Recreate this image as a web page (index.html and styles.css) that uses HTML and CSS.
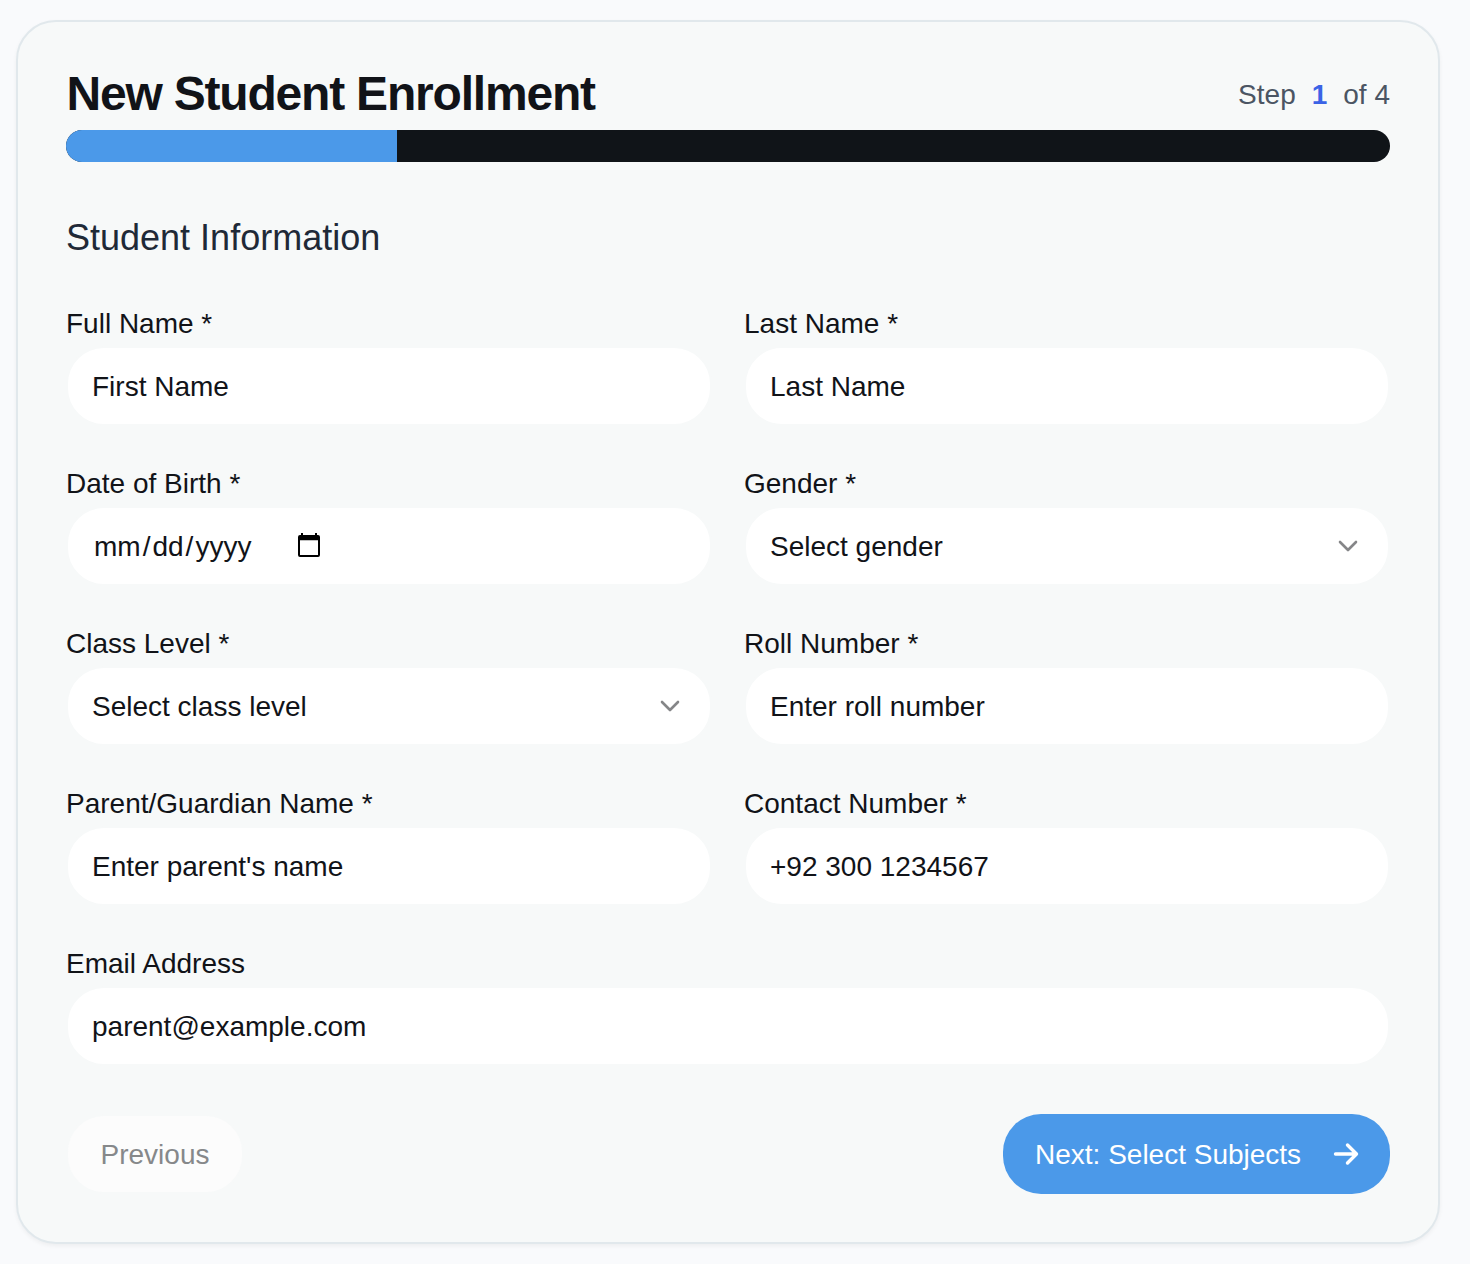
FILE: index.html
```html
<!DOCTYPE html>
<html lang="en">
<head>
<meta charset="utf-8">
<title>New Student Enrollment</title>
<link rel="stylesheet" href="styles.css">
</head>
<body>
<main class="card">
  <header class="head">
    <h1 class="title">New Student Enrollment</h1>
    <p class="step"><span>Step</span><b>1</b><span>of 4</span></p>
  </header>
  <div class="progress"><div class="bar"></div></div>
  <h2 class="section">Student Information</h2>
  <form class="grid">
    <div class="field"><label>Full Name *</label><div class="control">First Name</div></div>
    <div class="field"><label>Last Name *</label><div class="control">Last Name</div></div>
    <div class="field"><label>Date of Birth *</label><div class="control date"><span class="date-text"><span class="part">mm</span>/<span class="part">dd</span>/<span class="part">yyyy</span></span><svg class="calendar" viewBox="0 0 22 24"><path fill="#000" fill-rule="evenodd" d="M3 0h2v2h12V0h2v2h1a2 2 0 0 1 2 2v18a2 2 0 0 1-2 2H2a2 2 0 0 1-2-2V4a2 2 0 0 1 2-2h1zM2 7.200v14.800h18V7.200z"/></svg></div></div>
    <div class="field"><label>Gender *</label><div class="control select"><span>Select gender</span><svg class="chevron" viewBox="0 0 20 12"><path d="M2 2l8 8 8-8"/></svg></div></div>
    <div class="field"><label>Class Level *</label><div class="control select"><span>Select class level</span><svg class="chevron" viewBox="0 0 20 12"><path d="M2 2l8 8 8-8"/></svg></div></div>
    <div class="field"><label>Roll Number *</label><div class="control">Enter roll number</div></div>
    <div class="field"><label>Parent/Guardian Name *</label><div class="control">Enter parent's name</div></div>
    <div class="field"><label>Contact Number *</label><div class="control">+92 300 1234567</div></div>
    <div class="field wide"><label>Email Address</label><div class="control">parent@example.com</div></div>
  </form>
  <footer class="actions">
    <button class="prev" disabled>Previous</button>
    <button class="next"><span>Next: Select Subjects</span><svg class="arrow" viewBox="0 0 26 24"><path d="M2.500 12h21M14.500 3l9 9-9 9"/></svg></button>
  </footer>
</main>
</body>
</html>
```
FILE: styles.css
```css
* { box-sizing: border-box; }
body {
  margin: 0;
  padding: 20px 30px 20px 16px;
  height: 1264px;
  overflow: hidden;
  background: #f9fafc;
  color: #111318;
  font: 28px/40px "Liberation Sans", Arial, sans-serif;
}
.card {
  height: 1224px;
  padding: 42px 48px 48px;
  border: 2px solid #e1e8ec;
  border-radius: 40px;
  background: #f7f9f9;
  box-shadow: 0 2px 4px rgba(0, 0, 0, .05);
}
.head { display: flex; justify-content: space-between; align-items: center; height: 62px; margin-bottom: 4px; }
.title { margin: 0; padding: 0 0 2px .5px; font-size: 48px; line-height: 60px; letter-spacing: -1.2px; white-space: nowrap; }
.step { display: flex; gap: 16px; margin: 0; color: #4b5563; }
.step b { color: #3b63e6; }
.progress { height: 32px; border-radius: 16px; overflow: hidden; background: #101418; }
.bar { width: 25%; height: 100%; background: #4b99e9; }
.section { margin: 48px 0 40px; font-size: 36px; line-height: 56px; font-weight: 400; color: #1f2937; }
.grid { display: grid; grid-template-columns: 1fr 1fr; gap: 40px 32px; }
.field { height: 120px; }
.wide { grid-column: 1 / -1; }
label { display: block; height: 40px; line-height: 36px; }
.control { display: flex; align-items: center; height: 80px; padding: 1px 24px 0; border: 2px solid #f7f9f9; border-radius: 38px; background: #fff; }
.select { justify-content: space-between; padding-right: 30px; }
.chevron { width: 20px; height: 12px; margin-bottom: 2px; fill: none; stroke: #858688; stroke-width: 2.6; stroke-linecap: round; stroke-linejoin: round; }
.part { padding: 0 2px; }
.calendar { width: 22px; height: 24px; margin: 0 0 4px 45px; }
.actions { display: flex; justify-content: space-between; margin-top: 48px; }
button { height: 80px; border: 0; border-radius: 38px; font: inherit; }
.prev { width: 178px; padding: 1px 0 0; border: 2px solid #f7f9f9; background: #fcfcfc; color: #86888a; }
.next { display: flex; align-items: center; justify-content: space-between; width: 387px; padding: 0 31px 0 32px; background: #4b99e9; color: #fff; }
.next span { padding-top: 1px; }
.arrow { width: 26px; height: 24px; fill: none; stroke: #fff; stroke-width: 3.4; stroke-linecap: round; stroke-linejoin: round; }
```
